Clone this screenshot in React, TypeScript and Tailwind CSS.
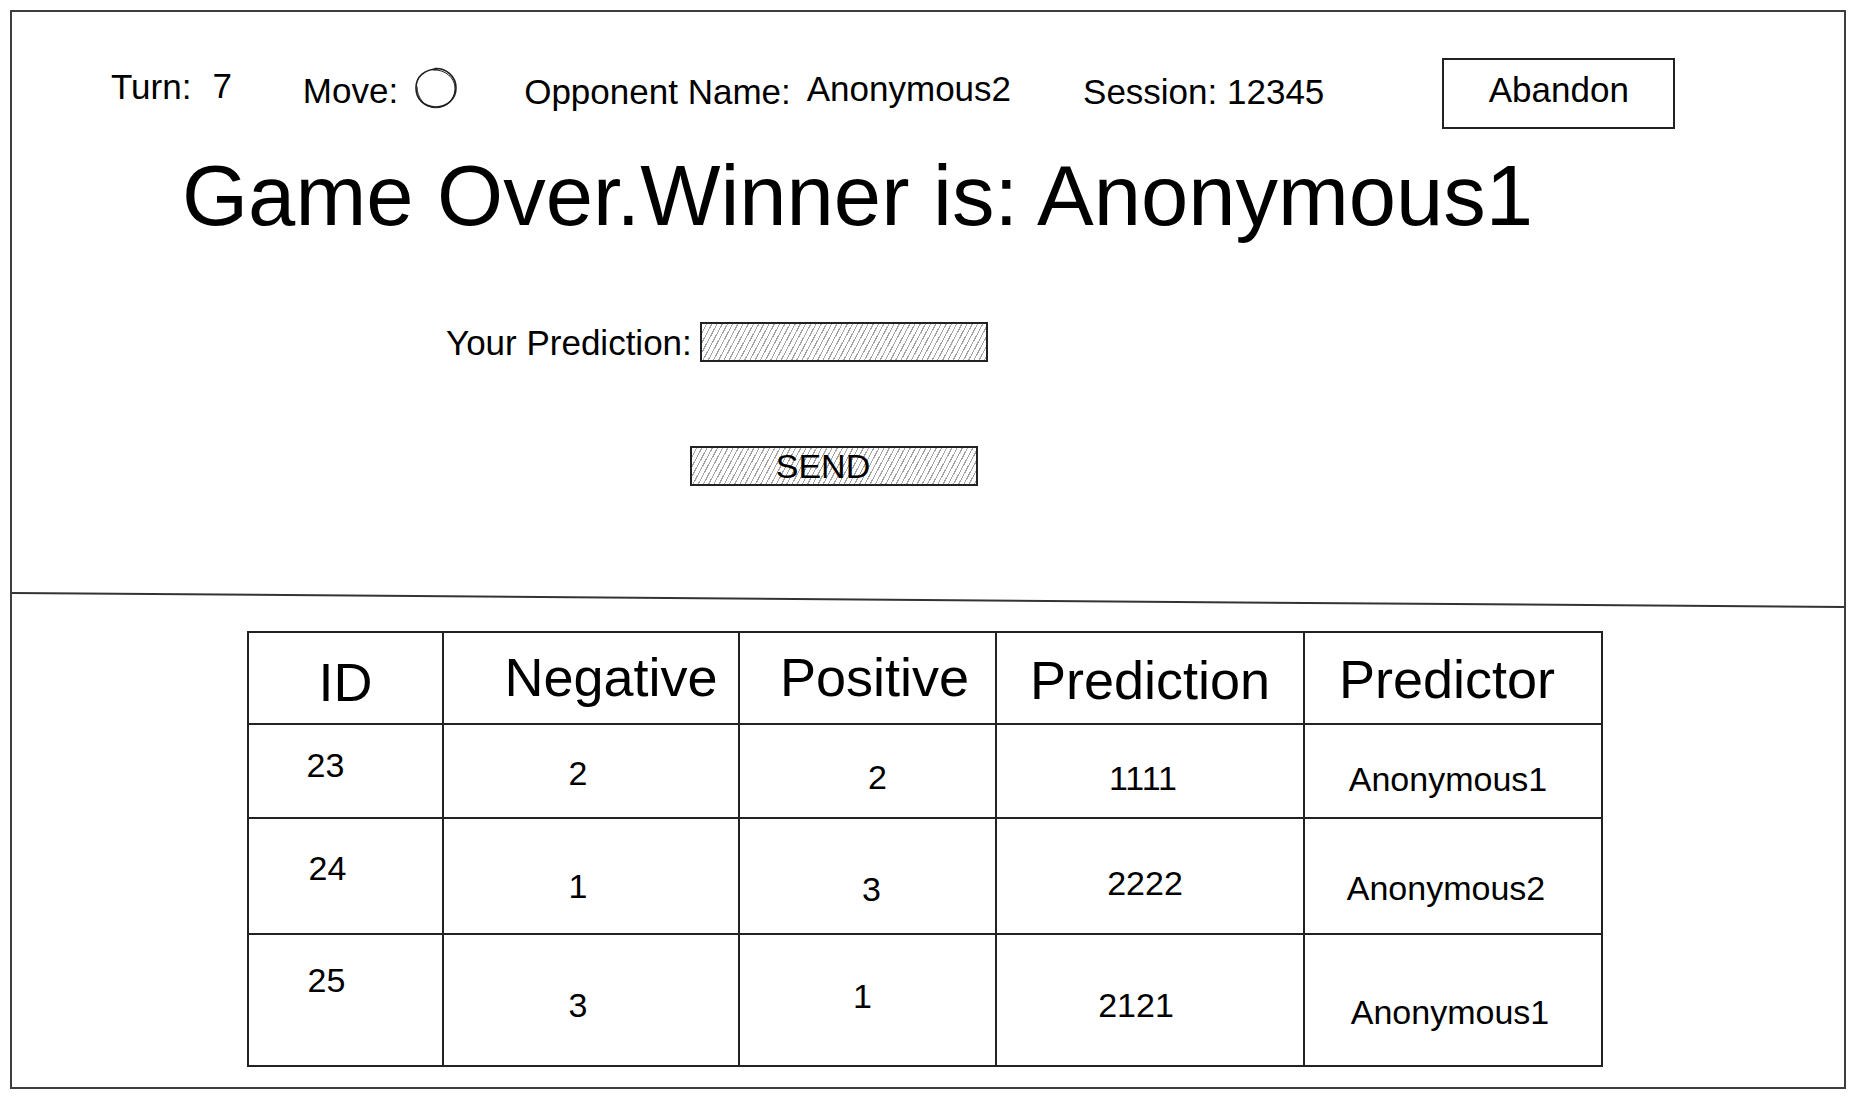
import React from 'react'

const hatch =
  'bg-[repeating-linear-gradient(118deg,transparent_0px,transparent_3.5px,#a3a3a3_3.5px,#a3a3a3_4.6px)]'

const heads = [
  { label: 'ID', cls: 'pt-[22px]' },
  { label: 'Negative', cls: 'pt-[17px] pl-[40px]' },
  { label: 'Positive', cls: 'pt-[17px] pl-[14px]' },
  { label: 'Prediction', cls: 'pt-[20px]' },
  { label: 'Predictor', cls: 'pt-[19px] pr-[12px]' },
]

// each cell nudged a little, like the sketch
const rows = [
  [
    { v: '23', cls: 'pt-[23px] pr-[40px]' },
    { v: '2', cls: 'pt-[31px] pr-[26px]' },
    { v: '2', cls: 'pt-[35px] pl-[20px]' },
    { v: '1111', cls: 'pt-[36px] pr-[14px]' },
    { v: 'Anonymous1', cls: 'pt-[37px] pr-[10px]' },
  ],
  [
    { v: '24', cls: 'pt-[32px] pr-[36px]' },
    { v: '1', cls: 'pt-[50px] pr-[26px]' },
    { v: '3', cls: 'pt-[53px] pl-[8px]' },
    { v: '2222', cls: 'pt-[47px] pr-[10px]' },
    { v: 'Anonymous2', cls: 'pt-[52px] pr-[14px]' },
  ],
  [
    { v: '25', cls: 'pt-[28px] pr-[38px]' },
    { v: '3', cls: 'pt-[53px] pr-[26px]' },
    { v: '1', cls: 'pt-[44px] pr-[10px]' },
    { v: '2121', cls: 'pt-[53px] pr-[28px]' },
    { v: 'Anonymous1', cls: 'pt-[60px] pr-[6px]' },
  ],
]

function SketchCircle() {
  return (
    <svg width="46" height="44" viewBox="0 0 46 44" fill="none" stroke="#1e1e1e" strokeLinecap="round">
      <path d="M22 2.5 C33 2 43 10 43 22 C43 33 34 41 23 41 C11 41 3 33 3 22 C3 11 11 3 25 3" strokeWidth="1.6" />
      <path d="M20 4 C32 3 42.5 12 42 23 C41.5 34 33 42 22 41.8 C12 41.5 4 32 4 21" strokeWidth="1" />
    </svg>
  )
}

export default function App() {
  return (
    <div className="w-[1860px] h-[1099px] bg-white pl-[10px] pt-[10px] font-['Liberation_Sans',Arial,sans-serif] text-black">
      <div className="w-[1836px] h-[1079px] border-2 border-[#3d3d3d] flex flex-col">
        {/* top part */}
        <div className="h-[587px] flex flex-col">
          <div className="mt-[42px] pl-[99px] flex items-start text-[35px] leading-none">
            <span className="mt-[15px]">Turn:</span>
            <span className="mt-[14px] ml-[21px]">7</span>
            <span className="mt-[19px] ml-[71px]">Move:</span>
            <span className="mt-[12px] ml-[15px]">
              <SketchCircle />
            </span>
            <span className="mt-[20px] ml-[65px]">Opponent Name:</span>
            <span className="mt-[17px] ml-[16px]">Anonymous2</span>
            <span className="mt-[20px] ml-[72px]">Session: 12345</span>
            <button className="mt-[4px] ml-[118px] w-[233px] h-[71px] border-2 border-[#222] flex items-center justify-center pb-[9px] leading-none">
              Abandon
            </button>
          </div>

          <h1 className="mt-[24px] pl-[170px] text-[85px] leading-none font-normal">
            Game Over.Winner is: Anonymous1
          </h1>

          <div className="mt-[84px] ml-[434px] flex items-center">
            <span className="text-[35px] leading-none">Your Prediction:</span>
            <input
              className={`ml-[8px] w-[288px] h-[40px] border-2 border-[#222] outline-none ${hatch}`}
              aria-label="prediction"
            />
          </div>

          <button
            className={`mt-[84px] ml-[678px] w-[288px] h-[40px] border-2 border-[#222] flex items-center justify-center pr-[22px] text-[34px] leading-none ${hatch}`}
          >
            SEND
          </button>
        </div>

        <div className="h-[2px] bg-[#333] rotate-[0.44deg]" />

        {/* table */}
        <div className="mt-[30px] ml-[235px]">
          <div className="w-[1356px] grid grid-cols-[195px_296px_257px_308px_298px] grid-rows-[92px_94px_116px_132px] border-t-2 border-l-2 border-[#222]">
            {heads.map((h) => (
              <div key={h.label} className={`border-r-2 border-b-2 border-[#222] text-center text-[54px] leading-none ${h.cls}`}>
                {h.label}
              </div>
            ))}
            {rows.map((r, i) =>
              r.map((c, j) => (
                <div key={`${i}-${j}`} className={`border-r-2 border-b-2 border-[#222] text-center text-[34px] leading-none ${c.cls}`}>
                  {c.v}
                </div>
              ))
            )}
          </div>
        </div>
      </div>
    </div>
  )
}
